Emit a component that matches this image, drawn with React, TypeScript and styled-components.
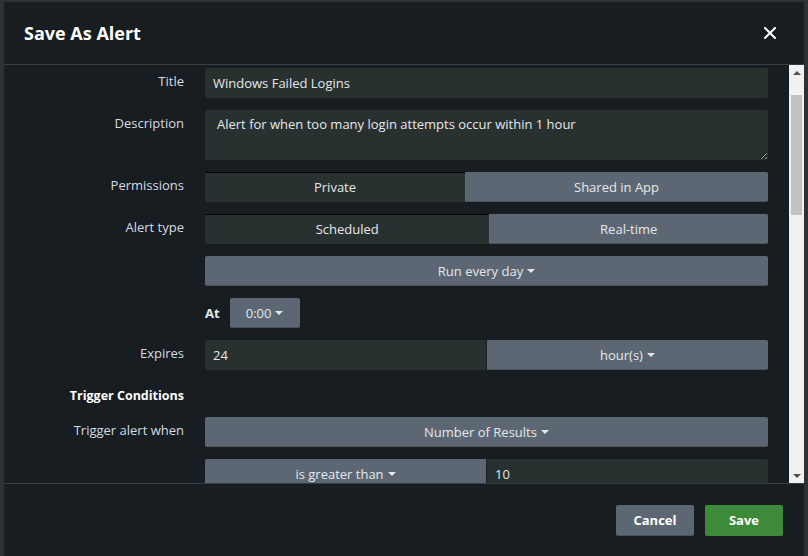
import * as React from "react";
import styled, { createGlobalStyle } from "styled-components";

const GlobalStyle = createGlobalStyle`
    html, body {
        margin: 0;
        padding: 0;
        background: #2c3236;
        font-family: "Open Sans", "Liberation Sans", sans-serif;
        overflow: hidden;
    }
`;

const Page = styled.div`
    width: 808px;
    height: 556px;
    display: flex;
    justify-content: center;
    padding-top: 2px;
    box-sizing: border-box;
    background: #2c3236;
`;
const Modal = styled.div`
    width: 800px;
    height: 580px;
    background: #171d21;
    display: flex;
    flex-direction: column;
`;
const Header = styled.div`
    height: 62px;
    flex: none;
    display: flex;
    align-items: center;
    justify-content: space-between;
    padding: 0 24px 0 20px;
    border-bottom: 1px solid #353e45;
`;
const Title = styled.h1`
    margin: 0;
    font-size: 18px;
    font-weight: 700;
    color: #ffffff;
`;
const Close = styled.button`
    background: none;
    border: none;
    padding: 0;
    width: 20px;
    height: 20px;
    display: flex;
    align-items: center;
    justify-content: center;
    cursor: pointer;
`;
const Body = styled.div`
    height: 418px;
    flex: none;
    display: flex;
`;
const Scroller = styled.div`
    flex: 1;
    overflow: hidden;
`;
const Rail = styled.div`
    width: 15px;
    flex: none;
    background: #f1f1f1;
    display: flex;
    flex-direction: column;
`;
const RailArrow = styled.div<{ $down?: boolean }>`
    height: 15px;
    flex: none;
    display: flex;
    align-items: center;
    justify-content: center;
    &::before {
        content: "";
        border-left: 4px solid transparent;
        border-right: 4px solid transparent;
        ${p =>
            p.$down
                ? "border-top: 4px solid #505050;"
                : "border-bottom: 4px solid #505050;"}
    }
`;
const RailTrack = styled.div`
    flex: 1;
    padding: 0 2px;
`;
const Thumb = styled.div`
    background: #c1c1c1;
    height: 120px;
`;
const Content = styled.div`
    min-height: 1351px;
    padding: 20px 21px 20px 0;
    box-sizing: border-box;
`;
const Row = styled.div`
    display: grid;
    grid-template-columns: 180px 1fr;
    column-gap: 21px;
    margin-bottom: 12px;
`;
const Label = styled.div`
    text-align: right;
    font-size: 13px;
    line-height: 16px;
    padding-top: 5px;
    color: #d5dbe1;
`;
const Heading = styled.div`
    width: 180px;
    text-align: right;
    font-size: 12.5px;
    line-height: 17px;
    font-weight: 700;
    color: #ffffff;
    padding: 5px 0 13px;
`;
const Input = styled.input<{ $joined?: "left" | "right" }>`
    width: 100%;
    height: 30px;
    box-sizing: border-box;
    border: none;
    border-radius: ${p =>
        p.$joined === "left" ? "2px 0 0 2px" : p.$joined === "right" ? "0 2px 2px 0" : "2px"};
    background: #293130;
    color: #e4e8ec;
    font: inherit;
    font-size: 13px;
    padding: 0 8px;
    outline: none;
`;
const TextArea = styled.textarea`
    width: 100%;
    height: 50px;
    box-sizing: border-box;
    border: none;
    border-radius: 2px;
    background: #293130;
    color: #e4e8ec;
    font: inherit;
    font-size: 13px;
    line-height: 16px;
    padding: 6px 12px;
    resize: vertical;
    outline: none;
    display: block;
`;
const Group = styled.div`
    display: flex;
    height: 30px;
`;
const Segment = styled.button<{ $active?: boolean }>`
    flex: 1 1 auto;
    height: 30px;
    border: none;
    font: inherit;
    font-size: 13px;
    color: #e4e8ec;
    padding: 0 12px;
    background: ${p => (p.$active ? "#293130" : "#5c6773")};
    border-top: 1px solid ${p => (p.$active ? "#000000" : "#5c6773")};
    border-bottom: 1px solid ${p => (p.$active ? "#293130" : "#4a535c")};
    border-radius: 0;
    &:first-child {
        border-radius: 2px 0 0 2px;
    }
    &:last-child {
        border-radius: 0 2px 2px 0;
    }
`;
const Half = styled.div`
    flex: 1 1 0;
    display: flex;
    & + & {
        margin-left: 1px;
    }
`;
const Dropdown = styled.button<{ $width?: number; $joined?: "left" | "right" }>`
    width: ${p => (p.$width ? `${p.$width}px` : "100%")};
    height: 30px;
    border: none;
    border-bottom: 1px solid #4a535c;
    border-radius: ${p =>
        p.$joined === "left" ? "2px 0 0 2px" : p.$joined === "right" ? "0 2px 2px 0" : "2px"};
    background: #5c6773;
    color: #e4e8ec;
    font: inherit;
    font-size: 13px;
    display: flex;
    align-items: center;
    justify-content: center;
    gap: 4px;
    padding: 0;
    &::after {
        content: "";
        border-left: 4px solid transparent;
        border-right: 4px solid transparent;
        border-top: 4px solid #e4e8ec;
        margin-top: 1px;
    }
`;
const InlineRow = styled.div`
    display: flex;
    align-items: center;
    gap: 10px;
`;
const InlineLabel = styled.span`
    font-size: 13px;
    font-weight: 700;
    color: #e4e8ec;
`;
const Footer = styled.div`
    flex: none;
    border-top: 1px solid #353e45;
    display: flex;
    justify-content: flex-end;
    gap: 11px;
    padding: 21px 21px 0;
`;
const ActionButton = styled.button<{ $primary?: boolean }>`
    height: 31px;
    min-width: 78px;
    padding: 0 16px;
    border: none;
    border-radius: 2px;
    font: inherit;
    font-size: 13px;
    font-weight: 700;
    color: #ffffff;
    background: ${p => (p.$primary ? "#3e8a3b" : "#5c6773")};
    border-bottom: 1px solid ${p => (p.$primary ? "#3e8a3b" : "#4a535c")};
`;

const App = () => {
    const scrollRef = React.useRef<HTMLDivElement>(null);
    React.useEffect(() => {
        if (scrollRef.current) scrollRef.current.scrollTop = 52;
    }, []);

    return (
        <Page>
            <GlobalStyle />
            <Modal>
                <Header>
                    <Title>Save As Alert</Title>
                    <Close aria-label="close">
                        <svg width="12" height="12" viewBox="0 0 12 12">
                            <path
                                d="M1 1 L11 11 M11 1 L1 11"
                                stroke="#ffffff"
                                strokeWidth="2"
                                strokeLinecap="square"
                            />
                        </svg>
                    </Close>
                </Header>
                <Body>
                    <Scroller ref={scrollRef}>
                        <Content>
                            <Heading>Settings</Heading>
                            <Row>
                                <Label>Title</Label>
                                <Input defaultValue="Windows Failed Logins" />
                            </Row>
                            <Row>
                                <Label>Description</Label>
                                <TextArea defaultValue="Alert for when too many login attempts occur within 1 hour" />
                            </Row>
                            <Row>
                                <Label>Permissions</Label>
                                <Group>
                                    <Segment $active>Private</Segment>
                                    <Segment>Shared in App</Segment>
                                </Group>
                            </Row>
                            <Row>
                                <Label>Alert type</Label>
                                <Group>
                                    <Segment $active>Scheduled</Segment>
                                    <Segment>Real-time</Segment>
                                </Group>
                            </Row>
                            <Row>
                                <div />
                                <Dropdown>Run every day</Dropdown>
                            </Row>
                            <Row>
                                <div />
                                <InlineRow>
                                    <InlineLabel>At</InlineLabel>
                                    <Dropdown $width={70}>0:00</Dropdown>
                                </InlineRow>
                            </Row>
                            <Row>
                                <Label>Expires</Label>
                                <Group>
                                    <Half>
                                        <Input $joined="left" defaultValue="24" />
                                    </Half>
                                    <Half>
                                        <Dropdown $joined="right">hour(s)</Dropdown>
                                    </Half>
                                </Group>
                            </Row>
                            <Heading>Trigger Conditions</Heading>
                            <Row>
                                <Label>Trigger alert when</Label>
                                <Dropdown>Number of Results</Dropdown>
                            </Row>
                            <Row>
                                <div />
                                <Group>
                                    <Half>
                                        <Dropdown $joined="left">is greater than</Dropdown>
                                    </Half>
                                    <Half>
                                        <Input $joined="right" defaultValue="10" />
                                    </Half>
                                </Group>
                            </Row>
                            <Row>
                                <Label>Trigger</Label>
                                <Group>
                                    <Segment $active>Once</Segment>
                                    <Segment>For each result</Segment>
                                </Group>
                            </Row>
                            <Row>
                                <Label>Throttle</Label>
                                <div />
                            </Row>
                            <Heading>Trigger Actions</Heading>
                            <Row>
                                <div />
                                <Dropdown $width={140}>+ Add Actions</Dropdown>
                            </Row>
                        </Content>
                    </Scroller>
                    <Rail>
                        <RailArrow />
                        <RailTrack>
                            <Thumb style={{ marginTop: 15 }} />
                        </RailTrack>
                        <RailArrow $down />
                    </Rail>
                </Body>
                <Footer>
                    <ActionButton>Cancel</ActionButton>
                    <ActionButton $primary>Save</ActionButton>
                </Footer>
            </Modal>
        </Page>
    );
};

export default App;
